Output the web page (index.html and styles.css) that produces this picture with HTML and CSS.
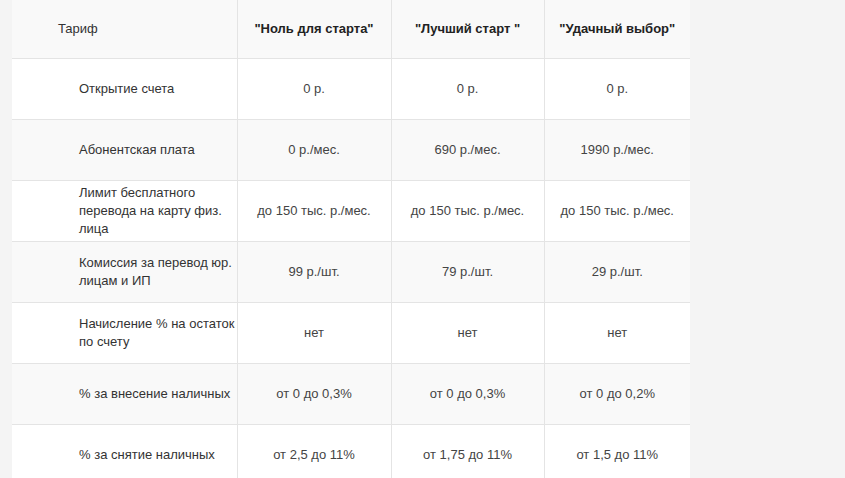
FILE: index.html
```html
<!DOCTYPE html>
<html lang="ru">
<head>
<meta charset="utf-8">
<title>Тарифы</title>
<link rel="stylesheet" href="styles.css">
</head>
<body>
<table class="tariffs">
  <colgroup>
    <col class="c1"><col class="c2"><col class="c3"><col class="c4">
  </colgroup>
  <thead>
    <tr class="head">
      <th class="label-head">Тариф</th>
      <th>"Ноль для старта"</th>
      <th>"Лучший старт "</th>
      <th>"Удачный выбор"</th>
    </tr>
  </thead>
  <tbody>
    <tr>
      <td class="label">Открытие счета</td>
      <td>0 р.</td><td>0 р.</td><td>0 р.</td>
    </tr>
    <tr class="alt">
      <td class="label">Абонентская плата</td>
      <td>0 р./мес.</td><td>690 р./мес.</td><td>1990 р./мес.</td>
    </tr>
    <tr>
      <td class="label">Лимит бесплатного перевода на карту физ. лица</td>
      <td>до 150 тыс. р./мес.</td><td>до 150 тыс. р./мес.</td><td>до 150 тыс. р./мес.</td>
    </tr>
    <tr class="alt">
      <td class="label">Комиссия за перевод юр. лицам и ИП</td>
      <td>99 р./шт.</td><td>79 р./шт.</td><td>29 р./шт.</td>
    </tr>
    <tr>
      <td class="label">Начисление % на остаток по счету</td>
      <td>нет</td><td>нет</td><td>нет</td>
    </tr>
    <tr class="alt">
      <td class="label">% за внесение наличных</td>
      <td>от 0 до 0,3%</td><td>от 0 до 0,3%</td><td>от 0 до 0,2%</td>
    </tr>
    <tr>
      <td class="label">% за снятие наличных</td>
      <td>от 2,5 до 11%</td><td>от 1,75 до 11%</td><td>от 1,5 до 11%</td>
    </tr>
  </tbody>
</table>
</body>
</html>
```
FILE: styles.css
```css
html, body {
  margin: 0;
  padding: 0;
  background: #f4f4f4;
}
body {
  font-family: "Liberation Sans", Arial, sans-serif;
  font-size: 13px;
  color: #444;
}
.tariffs {
  margin-left: 12px;
  width: 678px;
  border-collapse: collapse;
  table-layout: fixed;
}
.c1 { width: 225px; }
.c2 { width: 154px; }
.c3 { width: 153px; }
.c4 { width: 146px; }
.tariffs th,
.tariffs td {
  border: 1px solid #e4e4e4;
  text-align: center;
  vertical-align: middle;
  padding: 0 4px;
  line-height: 18px;
}
.tariffs tr > :first-child { border-left: none; }
.tariffs tr > :last-child { border-right: none; }
.tariffs thead th { border-top: none; }
.tariffs tbody tr:last-child td { border-bottom: none; }
.head {
  background: #f9f9f9;
  height: 58px;
}
.head th {
  font-weight: bold;
  color: #222;
}
.head .label-head {
  font-weight: normal;
  text-align: left;
  padding-left: 46px;
  color: #333;
}
tbody tr {
  background: #fff;
  height: 61px;
}
tbody tr.alt {
  background: #f9f9f9;
}
.tariffs td.label {
  text-align: left;
  padding-left: 67px;
  padding-right: 2px;
  color: #333;
}
```
